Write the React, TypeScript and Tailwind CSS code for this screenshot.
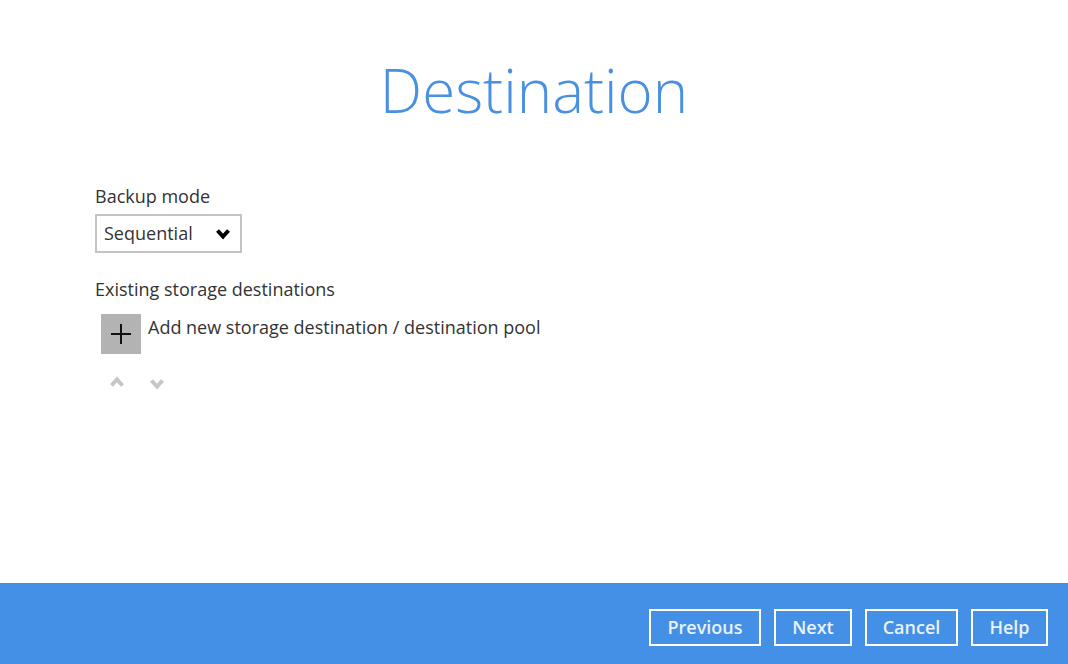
const font = { fontFamily: '"Open Sans", "Noto Sans", sans-serif' };

function Chevron({ up, className }: { up?: boolean; className?: string }) {
  return (
    <svg width="16" height="12" viewBox="0 0 16 12" className={className}>
      <path
        d={up ? "M2.5 9.5 8 3.5l5.5 6" : "M2.5 2.5 8 8.5l5.5-6"}
        fill="none"
        stroke="currentColor"
        strokeWidth="4"
        strokeLinejoin="miter"
      />
    </svg>
  );
}

function FooterButton({ label, width }: { label: string; width: string }) {
  return (
    <button
      className={`h-[37px] ${width} border-2 border-white text-[18px] font-semibold text-[#eaf2fd]`}
    >
      {label}
    </button>
  );
}

export default function App() {
  return (
    <div className="flex h-[664px] w-[1068px] flex-col bg-white text-[#333]" style={font}>
      <main className="flex-1">
        <h1 className="pt-[52px] text-center text-[60px] font-light leading-[76px] text-[#4a90e2]">
          Destination
        </h1>

        <section className="pl-[95px] pt-[55px]">
          <div className="text-[18px] leading-[26px]">Backup mode</div>
          <div className="mt-[5px] flex h-[39px] w-[147px] items-center justify-between border-2 border-[#c4c4c4] pl-[7px] pr-[9px]">
            <span className="text-[18px]">Sequential</span>
            <Chevron className="text-black" />
          </div>

          <div className="mt-[23px] text-[18px] leading-[26px]">Existing storage destinations</div>
          <div className="mt-[12px] flex items-start pl-[6px]">
            <div className="flex h-[40px] w-[40px] items-center justify-center bg-[#b3b3b3]">
              <svg width="22" height="22" viewBox="0 0 22 22">
                <path d="M11 1v20M1 11h20" stroke="#111" strokeWidth="2" />
              </svg>
            </div>
            <span className="ml-[7px] text-[18px] leading-[26px]">
              Add new storage destination / destination pool
            </span>
          </div>
          <div className="mt-[22px] flex items-start gap-[24px] pl-[14px] text-[#c6c6c6]">
            <Chevron up />
            <Chevron className="mt-[2px]" />
          </div>
        </section>
      </main>

      <footer className="flex h-[81px] items-center justify-end gap-[13px] bg-[#4390e6] pr-[20px] pt-[7px]">
        <FooterButton label="Previous" width="w-[112px]" />
        <FooterButton label="Next" width="w-[78px]" />
        <FooterButton label="Cancel" width="w-[93px]" />
        <FooterButton label="Help" width="w-[77px]" />
      </footer>
    </div>
  );
}
